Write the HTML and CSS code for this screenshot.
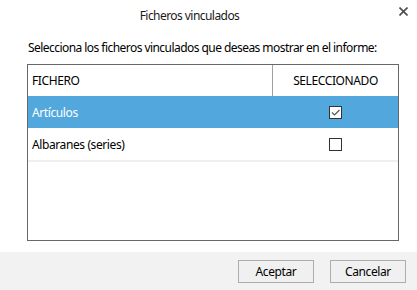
FILE: index.html
```html
<!DOCTYPE html>
<html lang="es">
<head>
<meta charset="utf-8">
<title>Ficheros vinculados</title>
<link rel="stylesheet" href="styles.css">
</head>
<body>
<div class="dialog">
  <div class="titlebar">
    <div class="title">Ficheros vinculados</div>
    <div class="close">
      <svg width="9" height="9" viewBox="0 0 9 9"><path d="M0.5 0.5 L8.5 8.5 M8.5 0.5 L0.5 8.5" stroke="#4d4d4d" stroke-width="1.6" fill="none"/></svg>
    </div>
  </div>
  <div class="content">
    <p class="instr">Selecciona los ficheros vinculados que deseas mostrar en el informe:</p>
    <div class="grid">
      <div class="row head">
        <div class="c1">FICHERO</div>
        <div class="c2">SELECCIONADO</div>
      </div>
      <div class="row item selected">
        <div class="c1">Artículos</div>
        <div class="c2"><span class="cb checked"><svg width="11" height="11" viewBox="0 0 11 11"><path d="M2 5.5 L4.5 8 L9.5 3" stroke="#555" stroke-width="1.2" fill="none"/></svg></span></div>
      </div>
      <div class="row item">
        <div class="c1">Albaranes (series)</div>
        <div class="c2"><span class="cb"></span></div>
      </div>
    </div>
  </div>
  <div class="footer">
    <button class="btn">Aceptar</button>
    <button class="btn">Cancelar</button>
  </div>
</div>
</body>
</html>
```
FILE: styles.css
```css
html, body {
  margin: 0;
  padding: 0;
  background: #ffffff;
}
.dialog {
  width: 417px;
  height: 290px;
  display: flex;
  flex-direction: column;
  font-family: "Noto Sans", "DejaVu Sans", sans-serif;
  font-size: 12px;
  letter-spacing: -0.4px;
  color: #000;
}
.titlebar {
  height: 30px;
  display: flex;
  align-items: center;
}
.title {
  flex: 1;
  text-align: center;
  font-size: 12px;
  letter-spacing: -0.55px;
  color: #1a1a1a;
  padding-top: 1px;
}
.close {
  width: 38px;
  height: 30px;
  display: flex;
  align-items: center;
  justify-content: flex-end;
  padding-right: 9px;
  box-sizing: border-box;
  margin-top: -8px;
}
.content {
  padding: 0 18px 0 27px;
}
.instr {
  margin: 10px 0 0 1px;
  height: 24px;
  line-height: 16px;
  letter-spacing: -0.55px;
  white-space: nowrap;
}
.grid {
  width: 372px;
  height: 177px;
  box-sizing: border-box;
  border: 1px solid #686868;
}
.row {
  display: flex;
  align-items: center;
}
.head {
  height: 31px;
  background: #fff;
}
.head .c1 {
  border-right: 1px solid #a0a0a0;
}
.c1 {
  width: 245px;
  height: 100%;
  display: flex;
  align-items: center;
  padding-left: 4px;
  box-sizing: border-box;
}
.c2 {
  flex: 1;
  height: 100%;
  display: flex;
  align-items: center;
  justify-content: center;
}
.item {
  height: 32px;
}
.item + .item {
  border-bottom: 2px solid #efefef;
}
.selected {
  background: #52a8dd;
  color: #fff;
}
.cb {
  width: 13px;
  height: 13px;
  box-sizing: border-box;
  border: 1px solid #333;
  background: #fff;
  display: flex;
  align-items: center;
  justify-content: center;
}
.cb svg {
  display: block;
}
.footer {
  margin-top: 11px;
  flex: 1;
  background: #f2f2f2;
  display: flex;
  justify-content: flex-end;
  align-items: flex-start;
  gap: 16px;
  padding: 8px 11px 0 0;
}
.btn {
  width: 76px;
  height: 23px;
  background: #f0f0f0;
  border: 1px solid #adadad;
  font-family: "Noto Sans", "DejaVu Sans", sans-serif;
  font-size: 12px;
  letter-spacing: -0.4px;
  color: #000;
  padding: 0;
  margin: 0;
}
```
